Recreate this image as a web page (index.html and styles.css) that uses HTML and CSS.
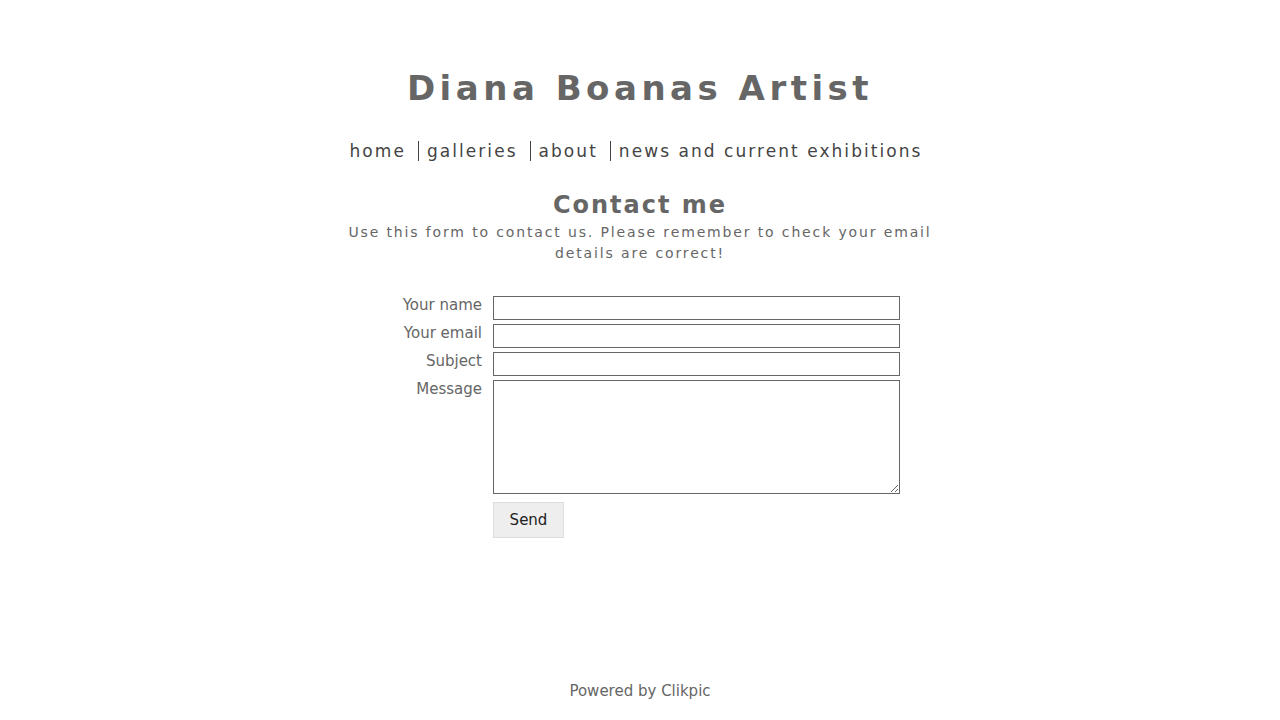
FILE: index.html
```html
<!DOCTYPE html>
<html>
<head>
<meta charset="utf-8">
<link rel="stylesheet" href="styles.css">
</head>
<body>
<div class="page">
  <header class="header">
    <h1 class="site-title">Diana Boanas Artist</h1>
    <nav class="nav">
      <a class="nav-item first" href="#">home</a>
      <a class="nav-item" href="#">galleries</a>
      <a class="nav-item" href="#">about</a>
      <a class="nav-item last" href="#">news and current exhibitions</a>
    </nav>
  </header>
  <main class="main">
    <h2 class="page-title">Contact me</h2>
    <p class="intro">Use this form to contact us. Please remember to check your email details are correct!</p>
    <form class="form">
      <label class="label">Your name</label>
      <input class="field" type="text">
      <label class="label">Your email</label>
      <input class="field" type="text">
      <label class="label">Subject</label>
      <input class="field" type="text">
      <label class="label">Message</label>
      <textarea class="field area"></textarea>
      <span></span>
      <div><button class="send" type="button">Send</button></div>
    </form>
  </main>
  <footer class="footer">Powered by Clikpic</footer>
</div>
</body>
</html>
```
FILE: styles.css
```css
html, body {
  margin: 0;
  padding: 0;
  background: #fff;
}
body {
  font-family: "DejaVu Sans", sans-serif;
  color: #666;
}
.page {
  height: 720px;
  display: flex;
  flex-direction: column;
  align-items: center;
}
.header {
  display: flex;
  flex-direction: column;
  align-items: center;
  padding-top: 68px;
}
.site-title {
  margin: 0;
  font-size: 34px;
  font-weight: bold;
  letter-spacing: 4.5px;
  line-height: 40px;
  color: #666;
}
.nav {
  display: flex;
  margin-top: 33px;
  height: 20px;
  align-items: center;
  padding-right: 16px;
}
.nav-item {
  font-size: 17px;
  letter-spacing: 2.05px;
  color: #444;
  text-decoration: none;
  padding: 0 12px 0 8px;
  border-left: 1px solid #444;
  line-height: 20px;
}
.nav-item.first {
  border-left: none;
}
.nav-item.last {
  padding-right: 0;
}
.main {
  display: flex;
  flex-direction: column;
  align-items: center;
  margin-top: 29px;
}
.page-title {
  margin: 0;
  font-size: 24px;
  font-weight: bold;
  letter-spacing: 2px;
  line-height: 30px;
  color: #666;
}
.intro {
  margin: 2px 0 0;
  width: 600px;
  text-align: center;
  font-size: 14px;
  letter-spacing: 1.86px;
  line-height: 21px;
  color: #666;
}
.form {
  margin-top: 32px;
  display: grid;
  grid-template-columns: 130px 407px;
  column-gap: 11px;
  row-gap: 4px;
  margin-left: -28px;
}
.label {
  text-align: right;
  font-size: 15px;
  line-height: 18px;
  color: #666;
}
.field {
  box-sizing: border-box;
  width: 407px;
  height: 24px;
  margin: 0;
  border: 1px solid #666;
  padding: 2px;
  font-family: "DejaVu Sans", sans-serif;
  background: #fff;
}
.area {
  height: 114px;
  resize: vertical;
}
.send {
  margin-top: 4px;
  width: 71px;
  height: 36px;
  background: #eee;
  border: 1px solid #ddd;
  font-family: "DejaVu Sans", sans-serif;
  font-size: 15px;
  color: #222;
  padding: 0;
}
.footer {
  margin-top: auto;
  margin-bottom: 20px;
  font-size: 15px;
  color: #666;
  line-height: 18px;
}
```
